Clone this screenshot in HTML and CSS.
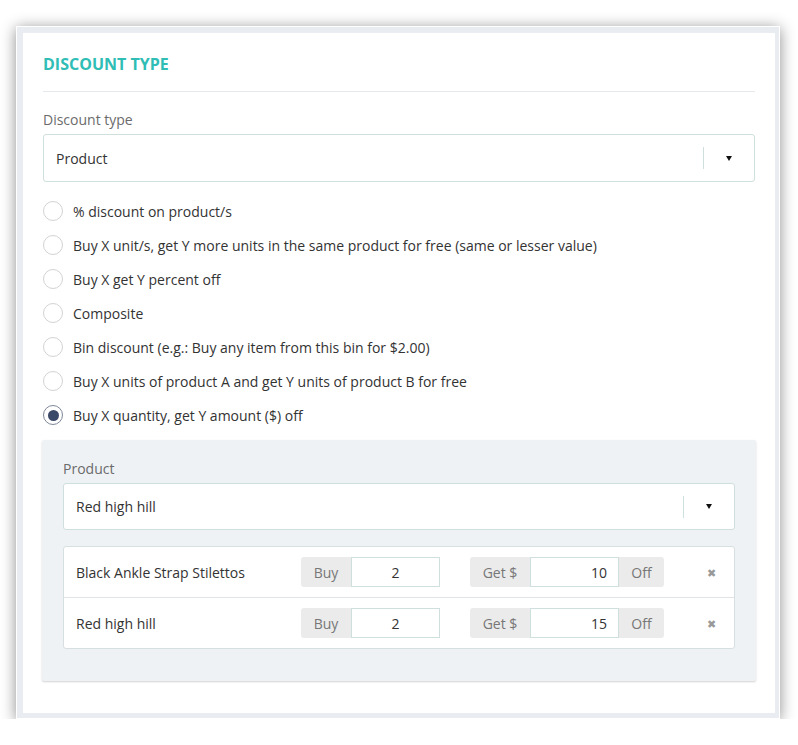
FILE: index.html
```html
<!DOCTYPE html>
<html>
<head>
    <title>Discount Type</title>
    <link rel="stylesheet" href="styles.css">
</head>
<body>
    <div class="frame">
    <div class="card">
        <h2 class="card-title">DISCOUNT TYPE</h2>

        <label class="field-label">Discount type</label>
        <div class="select main-select">
            <span class="select-value">Product</span>
            <span class="select-caret"><span class="caret"></span></span>
        </div>

        <ul class="radio-list">
            <li class="radio-item"><span class="radio"></span>% discount on product/s</li>
            <li class="radio-item"><span class="radio"></span>Buy X unit/s, get Y more units in the same product for free (same or lesser value)</li>
            <li class="radio-item"><span class="radio"></span>Buy X get Y percent off</li>
            <li class="radio-item"><span class="radio"></span>Composite</li>
            <li class="radio-item"><span class="radio"></span>Bin discount (e.g.: Buy any item from this bin for $2.00)</li>
            <li class="radio-item"><span class="radio"></span>Buy X units of product A and get Y units of product B for free</li>
            <li class="radio-item"><span class="radio checked"></span>Buy X quantity, get Y amount ($) off</li>
        </ul>

        <div class="panel">
            <label class="field-label">Product</label>
            <div class="select">
                <span class="select-value">Red high hill</span>
                <span class="select-caret"><span class="caret"></span></span>
            </div>

            <div class="product-table">
                <div class="product-row">
                    <span class="product-name">Black Ankle Strap Stilettos</span>
                    <div class="input-group buy">
                        <span class="addon">Buy</span>
                        <input class="qty center" type="text" value="2">
                    </div>
                    <div class="input-group get">
                        <span class="addon">Get $</span>
                        <input class="qty right" type="text" value="10">
                        <span class="addon">Off</span>
                    </div>
                    <span class="remove">&#10006;</span>
                </div>
                <div class="product-row">
                    <span class="product-name">Red high hill</span>
                    <div class="input-group buy">
                        <span class="addon">Buy</span>
                        <input class="qty center" type="text" value="2">
                    </div>
                    <div class="input-group get">
                        <span class="addon">Get $</span>
                        <input class="qty right" type="text" value="15">
                        <span class="addon">Off</span>
                    </div>
                    <span class="remove">&#10006;</span>
                </div>
            </div>
        </div>
    </div>
    </div>
</body>
</html>
```

FILE: styles.css
```css
body {
    margin: 0;
    background: #fff;
    font-family: "Open Sans", Arial, sans-serif;
    font-size: 14px;
    color: #333;
}
.frame {
    margin: 26px 18px 0 16px;
    border: 1px solid #fff;
    padding: 6px 4px 5px 6px;
    background: #e9edf2;
    box-shadow: 0 2px 14px rgba(0,0,0,0.45);
}
.card {
    background: #fff;
    padding: 0 20px 32px 20px;
}
.card-title {
    margin: 0 0 18px 0;
    padding: 21px 0 17px 0;
    border-bottom: 1px solid #e6e9eb;
    font-size: 16px;
    line-height: 20px;
    font-weight: bold;
    color: #2fbdb5;
}
.field-label {
    display: block;
    line-height: 20px;
    color: #6b6b6b;
    margin-bottom: 4px;
}
.select {
    display: flex;
    align-items: center;
    height: 45px;
    border: 1px solid #cfdfdd;
    border-radius: 3px;
    background: #fff;
}
.main-select {
    height: 46px;
}
.select-value {
    flex: 1;
    padding-left: 12px;
}
.select-caret {
    width: 50px;
    height: 22px;
    border-left: 1px solid #cfdfdd;
    display: flex;
    align-items: center;
    justify-content: center;
}
.caret {
    width: 0;
    height: 0;
    border-left: 3.5px solid transparent;
    border-right: 3.5px solid transparent;
    border-top: 5px solid #111;
}
.radio-list {
    list-style: none;
    margin: 12px 0 0 0;
    padding: 0;
}
.radio-item {
    display: flex;
    align-items: center;
    height: 34px;
}
.radio {
    width: 20px;
    height: 20px;
    border: 1px solid #d3d3d3;
    border-radius: 50%;
    margin-right: 10px;
    box-sizing: border-box;
    display: flex;
    align-items: center;
    justify-content: center;
}
.radio.checked {
    border-color: #7d8797;
}
.radio.checked::after {
    content: "";
    width: 11px;
    height: 11px;
    border-radius: 50%;
    background: #3b4968;
}
.panel {
    margin-top: 8px;
    background: #eef2f5;
    border-radius: 2px;
    box-shadow: 0 1px 2px rgba(0,0,0,0.18);
    padding: 19px 21px 32px 21px;
    margin-left: -1px;
    margin-right: -1px;
}
.product-table {
    margin-top: 16px;
    background: #fff;
    border: 1px solid #d7e0e0;
    border-radius: 3px;
}
.product-row {
    display: flex;
    align-items: center;
    height: 50px;
    padding-left: 12px;
}
.product-row + .product-row {
    border-top: 1px solid #e0e4e6;
}
.product-name {
    flex: 1;
}
.input-group {
    display: flex;
    height: 30px;
}
.input-group.get {
    margin-left: 30px;
}
.addon {
    display: flex;
    align-items: center;
    justify-content: center;
    background: #ebebeb;
    color: #777;
}
.addon:first-child {
    border-radius: 3px 0 0 3px;
}
.addon:last-child {
    border-radius: 0 3px 3px 0;
}
.buy .addon { width: 50px; }
.get .addon:first-child { width: 60px; }
.get .addon:last-child { width: 45px; }
.qty {
    width: 89px;
    box-sizing: border-box;
    border: 1px solid #cfdfdd;
    font-family: inherit;
    font-size: 14px;
    color: #333;
    margin: 0;
    padding: 0 11px;
}
.qty.center { text-align: center; }
.qty.right { text-align: right; }
.remove {
    width: 34px;
    margin-left: 30px;
    margin-right: 6px;
    text-align: center;
    font-size: 11px;
    color: #999;
}
```
